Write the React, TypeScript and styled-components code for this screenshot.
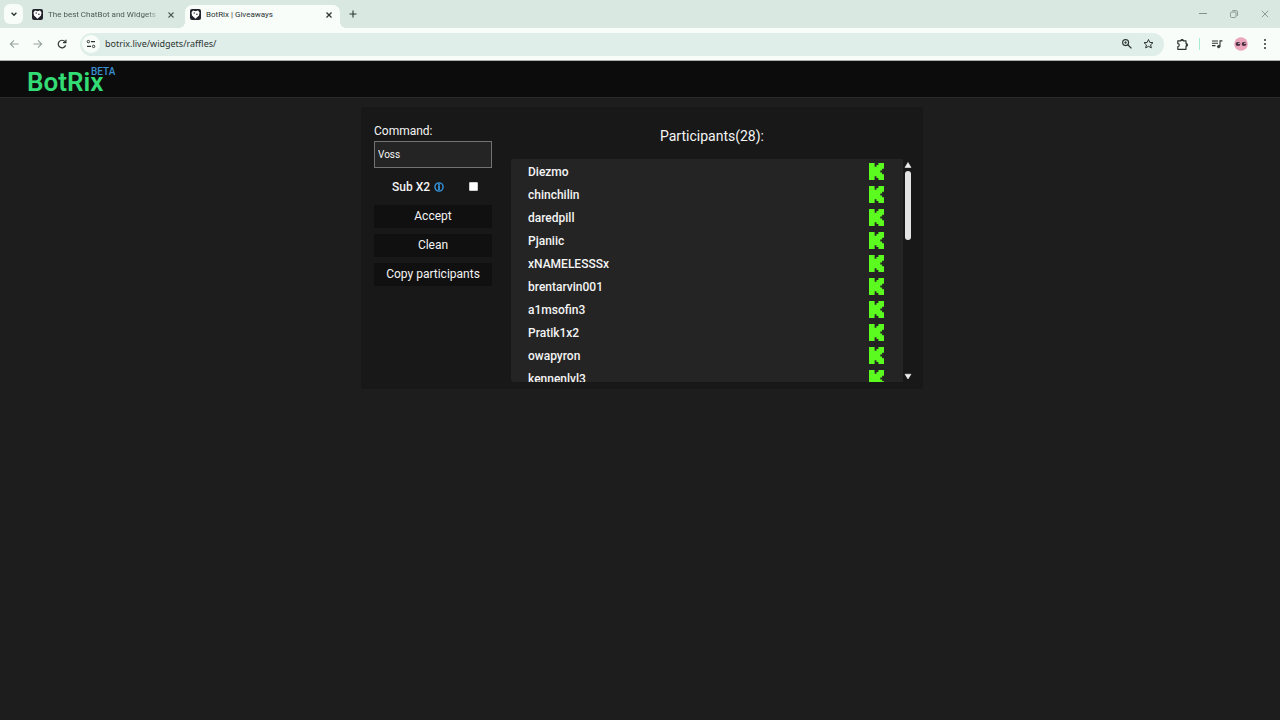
import React, { useState } from "react";
import styled, { createGlobalStyle } from "styled-components";

const GlobalStyle = createGlobalStyle`
  *, *::before, *::after { box-sizing: border-box; }
  body { margin: 0; background: #1d1d1d; color: #f4f4f4; font-family: Roboto, sans-serif; }
  button, input { font: inherit; color: inherit; }
  button { border: 0; padding: 0; background: none; cursor: pointer; }
  h1, h2, ul { margin: 0; padding: 0; font-weight: 400; }
  svg { display: block; flex: none; }
`;

const Chrome = styled.div`
  font-family: "Noto Sans", "Open Sans", sans-serif;
  color: #2c3532;
`;

const TabStrip = styled.div`
  display: flex;
  align-items: flex-end;
  height: 28px;
  padding-left: 4px;
  background: #d9e8e1;
`;

const TabSearch = styled.button`
  display: grid;
  place-items: center;
  width: 19px;
  height: 20px;
  margin-bottom: 4px;
  border-radius: 6px;
  background: #f8fdfa;
`;

const Tab = styled.div<{ $active?: boolean }>`
  position: relative;
  display: flex;
  align-items: center;
  gap: 5px;
  width: ${(p) => (p.$active ? 155 : 162)}px;
  height: 23px;
  padding: 0 ${(p) => (p.$active ? 5 : 8)}px 4px ${(p) => (p.$active ? 5 : 9)}px;
  border-radius: 7px 7px 0 0;
  background: ${(p) => (p.$active ? "#f8fdfa" : "transparent")};
  color: ${(p) => (p.$active ? "#2c3532" : "#4f5a56")};

  &::before,
  &::after {
    content: ${(p) => (p.$active ? '""' : "none")};
    position: absolute;
    bottom: 0;
    width: 6px;
    height: 6px;
  }
  &::before {
    right: 100%;
    background: radial-gradient(circle at 0 0, transparent 6px, #f8fdfa 6px);
  }
  &::after {
    left: 100%;
    background: radial-gradient(circle at 100% 0, transparent 6px, #f8fdfa 6px);
  }
`;

const TabTitle = styled.span<{ $fade?: boolean }>`
  flex: 1;
  overflow: hidden;
  font-family: Roboto, sans-serif;
  font-size: 8px;
  line-height: 12px;
  white-space: nowrap;
  ${(p) => p.$fade && "mask-image: linear-gradient(90deg, #000 88%, transparent);"}
`;

const IconButton = styled.button<{ $size?: number }>`
  display: grid;
  place-items: center;
  width: ${(p) => p.$size ?? 12}px;
  height: ${(p) => p.$size ?? 12}px;
`;

const NewTab = styled(IconButton)`
  margin: 0 0 8px 7px;
`;

const WindowControls = styled.div`
  display: flex;
  gap: 19px;
  margin: 0 9px 8px auto;
  color: #84918c;
`;

const Toolbar = styled.div`
  display: flex;
  align-items: center;
  height: 33px;
  padding: 0 8px;
  border-bottom: 1px solid #a9b0ad;
  background: #f8fdfa;
`;

const NavButtons = styled.div`
  display: flex;
  gap: 12px;
  margin-right: 12px;
`;

const AddressBar = styled.div`
  display: flex;
  flex: 1;
  align-items: center;
  height: 23px;
  padding: 0 9px 0 2px;
  border-radius: 12px;
  background: #dfeee9;
`;

const SiteInfo = styled(IconButton)`
  border-radius: 50%;
  background: #f8fdfa;
`;

const AddressInput = styled.input`
  flex: 1;
  min-width: 0;
  padding: 0 0 0 5px;
  border: 0;
  outline: 0;
  background: none;
  font-size: 9px;
  line-height: 16px;
`;

const BarIcons = styled.div`
  display: flex;
  gap: 10px;
`;

const Actions = styled.div`
  display: flex;
  align-items: center;
  gap: 10px;
  padding-left: 12px;
`;

const Divider = styled.span`
  width: 1px;
  height: 12px;
  background: #a5ecd0;
`;

const Header = styled.header`
  display: flex;
  height: 37px;
  padding: 5px 27px 0;
  border-bottom: 1px solid #2b2b2b;
  background: #0c0c0c;
`;

const Brand = styled.a`
  position: relative;
  color: #33dc74;
  font-size: 26px;
  font-weight: 600;
  line-height: 32px;
  text-decoration: none;
`;

const Beta = styled.sup`
  position: absolute;
  top: 0;
  right: -12px;
  color: #3a8fd0;
  font-size: 10px;
  font-weight: 500;
  line-height: 12px;
`;

const Main = styled.main`
  padding: 9px 8px 20px 12px;
`;

const Panel = styled.section`
  display: grid;
  grid-template-columns: 118px minmax(0, 1fr);
  gap: 19px;
  max-width: 562px;
  margin: 0 auto;
  padding: 16px 10px 7px 13px;
  border-radius: 3px;
  background: #181818;
`;

const Controls = styled.form`
  display: flex;
  flex-direction: column;
`;

const Label = styled.label`
  font-size: 12px;
  line-height: 16px;
`;

const CommandInput = styled.input`
  width: 100%;
  height: 27px;
  margin-top: 2px;
  padding: 0 3px;
  border: 1px solid #737373;
  border-radius: 0;
  outline: 0;
  background: #242424;
  font-size: 10px;
`;

const SubRow = styled.div`
  display: flex;
  align-items: center;
  gap: 4px;
  height: 37px;
  padding: 0 14px 0 18px;
  font-weight: 500;
`;

const Check = styled.input`
  appearance: none;
  width: 9px;
  height: 9px;
  margin: 0 0 0 auto;
  border: 1px solid #cfcfcf;
  border-radius: 1px;
  background: #fff;
  &:checked { background: #3a8fd0; }
`;

const ActionList = styled.div`
  display: grid;
  gap: 6px;
`;

const ActionButton = styled.button`
  height: 23px;
  background: #101010;
  font-size: 12px;
  line-height: 23px;
`;

const Participants = styled.div`
  min-width: 0;
`;

const Heading = styled.h2`
  padding: 3px 0 13px;
  font-size: 14px;
  line-height: 20px;
  text-align: center;
`;

const ListFrame = styled.div`
  display: grid;
  grid-template-columns: minmax(0, 1fr) 10px;
  height: 223px;
`;

const List = styled.ul`
  overflow: hidden;
  padding: 1px 19px 0 17px;
  border-radius: 3px 0 0 3px;
  background: #242424;
  list-style: none;
`;

const Row = styled.li`
  display: flex;
  align-items: center;
  justify-content: space-between;
  height: 23px;
  font-size: 12px;
  font-weight: 500;
`;

const Scrollbar = styled.div`
  display: flex;
  flex-direction: column;
  align-items: center;
  color: #f0f0f0;
`;

const Thumb = styled.div`
  width: 6px;
  height: 69px;
  margin-bottom: auto;
  border-radius: 3px;
  background: #e4e4e4;
`;

type StrokeProps = { d: string; size?: number; width?: number; color?: string };

const Stroke = ({ d, size = 12, width = 1.1, color = "currentColor" }: StrokeProps) => (
  <svg width={size} height={size} viewBox="0 0 12 12" fill="none" stroke={color} strokeWidth={width}>
    <path d={d} />
  </svg>
);

const Favicon = () => (
  <svg width="11" height="11" viewBox="0 0 11 11">
    <rect width="11" height="11" rx="2" fill="#23232c" />
    <path d="M3 1.5 5.5 2.2 8 1.5 9.5 3.6 9 6.5 5.5 9.8 2 6.5 1.5 3.6Z" fill="#fff" />
    <circle cx="4.2" cy="4" r=".7" fill="#23232c" />
    <circle cx="6.9" cy="5.2" r=".7" fill="#23232c" />
  </svg>
);

const KickLogo = () => (
  <svg width="15" height="17" viewBox="0 0 8 9" preserveAspectRatio="none" fill="#5cfb20" role="img" aria-label="Kick">
    <path d="M0 0H3V2H4V1H5V0H8V3H7V4H6V5H7V6H8V9H5V8H4V7H3V9H0Z" />
  </svg>
);

const InfoIcon = () => (
  <svg width="10" height="10" viewBox="0 0 10 10" fill="none" stroke="#3594dc">
    <circle cx="5" cy="5" r="4.1" strokeWidth="1.4" />
    <path d="M5 1.6v1.6M5 3.6v4.6" strokeWidth="1.8" />
  </svg>
);

const SiteInfoIcon = () => (
  <svg width="10" height="10" viewBox="0 0 10 10" fill="none" stroke="currentColor">
    <circle cx="2.4" cy="2.6" r="1.2" />
    <path d="M5 2.6h4M1 7.4h4" strokeWidth="1.1" />
    <circle cx="7.6" cy="7.4" r="1.2" />
  </svg>
);

const ZoomIcon = () => (
  <svg width="12" height="12" viewBox="0 0 12 12" fill="none" stroke="currentColor">
    <circle cx="4.6" cy="4.6" r="3" strokeWidth="1.1" />
    <path d="m6.8 6.8 3.6 3.6" strokeWidth="1.3" />
    <path d="M4.6 3.2v2.8M3.2 4.6h2.8" strokeWidth=".8" />
  </svg>
);

const PuzzleIcon = () => (
  <svg width="13" height="13" viewBox="0 0 13 13" fill="none" stroke="currentColor" strokeWidth="1.2" strokeLinejoin="round">
    <path d="M1.8 2.8H4.9A1.2 1.2 0 0 1 7.3 2.8H10V5.6A1.3 1.3 0 0 1 10 8.2V11.3H1.8V8.6A1.4 1.4 0 0 0 1.8 5.6Z" />
    <path d="M5 2.5A1.1 1.1 0 0 1 7.2 2.5ZM10.4 5.8A1.1 1.1 0 0 1 10.4 8Z" fill="currentColor" strokeWidth=".8" />
  </svg>
);

const MediaIcon = () => (
  <svg width="12" height="12" viewBox="0 0 12 12" fill="none" stroke="currentColor" strokeWidth="1.1">
    <path d="M1 3h6M1 5.3h6M1 7.6h3.5M9 8.6V2.9h2.4" />
    <circle cx="7.7" cy="8.6" r="1.3" fill="currentColor" strokeWidth=".6" />
  </svg>
);

const Avatar = () => (
  <svg width="14" height="14" viewBox="0 0 14 14">
    <circle cx="7" cy="7" r="6.8" fill="#eaa6bd" />
    <ellipse cx="4" cy="7" rx="2.4" ry="1.9" fill="#4c2e40" />
    <ellipse cx="10" cy="7" rx="2.4" ry="1.9" fill="#4c2e40" />
    <path d="M4.2 6.5h1.5M10.2 6.5h1.5" stroke="#f3dbe5" strokeWidth=".9" />
  </svg>
);

const MenuDots = () => (
  <svg width="12" height="12" viewBox="0 0 12 12" fill="currentColor">
    <circle cx="6" cy="2" r="1" />
    <circle cx="6" cy="6" r="1" />
    <circle cx="6" cy="10" r="1" />
  </svg>
);

const RestoreIcon = () => (
  <svg width="12" height="12" viewBox="0 0 12 12" fill="none" stroke="currentColor" strokeWidth=".9">
    <rect x="2.5" y="4" width="5.5" height="5.5" rx="1.2" />
    <path d="M4.3 2.6H8A1.5 1.5 0 0 1 9.5 4.1V7.8" />
  </svg>
);

const CLOSE = "m3.5 3.5 5 5m0-5-5 5";

const participants = [
  "Diezmo",
  "chinchilin",
  "daredpill",
  "Pjaniic",
  "xNAMELESSSx",
  "brentarvin001",
  "a1msofin3",
  "Pratik1x2",
  "owapyron",
  "kennenlvl3",
];

export default function App() {
  const [command, setCommand] = useState("Voss");
  const [address, setAddress] = useState("botrix.live/widgets/raffles/");

  return (
    <>
      <GlobalStyle />
      <Chrome>
        <TabStrip>
          <TabSearch aria-label="Search tabs">
            <Stroke d="m3.6 4.8 2.4 2.4 2.4-2.4" width={1.4} />
          </TabSearch>
          <Tab>
            <Favicon />
            <TabTitle $fade>The best ChatBot and Widgets</TabTitle>
            <IconButton aria-label="Close tab"><Stroke d={CLOSE} /></IconButton>
          </Tab>
          <Tab $active>
            <Favicon />
            <TabTitle>BotRix | Giveaways</TabTitle>
            <IconButton aria-label="Close tab"><Stroke d={CLOSE} width={1.3} /></IconButton>
          </Tab>
          <NewTab aria-label="New tab"><Stroke d="M6 2.5v7M2.5 6h7" /></NewTab>
          <WindowControls>
            <IconButton aria-label="Minimize"><Stroke d="M2 5.5h8" width={1} /></IconButton>
            <IconButton aria-label="Restore"><RestoreIcon /></IconButton>
            <IconButton aria-label="Close window"><Stroke d="m2.8 2.8 6.4 6.4m0-6.4L2.8 9.2" width={0.9} /></IconButton>
          </WindowControls>
        </TabStrip>
        <Toolbar>
          <NavButtons>
            <IconButton aria-label="Back"><Stroke color="#98a39f" d="M10.5 6H2.5M6 2.3 2.3 6 6 9.7" /></IconButton>
            <IconButton aria-label="Forward"><Stroke color="#98a39f" d="M1.5 6h8M6 2.3 9.7 6 6 9.7" /></IconButton>
            <IconButton aria-label="Reload"><Stroke d="M9.6 7.3A3.8 3.8 0 1 1 9 3.7M9.9 1.8V4.7H7" width={1.2} /></IconButton>
          </NavButtons>
          <AddressBar>
            <SiteInfo $size={18} aria-label="Site information"><SiteInfoIcon /></SiteInfo>
            <AddressInput aria-label="Address" value={address} onChange={(e) => setAddress(e.target.value)} />
            <BarIcons>
              <IconButton aria-label="Zoom"><ZoomIcon /></IconButton>
              <IconButton aria-label="Bookmark">
                <Stroke d="m5.5 1.5 1.3 2.9 3.2.3-2.4 2.1.7 3.1L5.5 8.3 2.7 9.9l.7-3.1L1 4.7l3.2-.3Z" width={1} />
              </IconButton>
            </BarIcons>
          </AddressBar>
          <Actions>
            <IconButton $size={13} aria-label="Extensions"><PuzzleIcon /></IconButton>
            <Divider />
            <IconButton $size={14} aria-label="Media"><MediaIcon /></IconButton>
            <IconButton $size={14} aria-label="Profile"><Avatar /></IconButton>
            <IconButton $size={14} aria-label="Menu"><MenuDots /></IconButton>
          </Actions>
        </Toolbar>
      </Chrome>

      <Header>
        <Brand href="#">BotRix<Beta>BETA</Beta></Brand>
      </Header>

      <Main>
        <Panel>
          <Controls onSubmit={(e) => e.preventDefault()}>
            <Label htmlFor="command">Command:</Label>
            <CommandInput id="command" value={command} onChange={(e) => setCommand(e.target.value)} />
            <SubRow>
              <Label htmlFor="sub">Sub X2</Label>
              <InfoIcon />
              <Check id="sub" type="checkbox" />
            </SubRow>
            <ActionList>
              <ActionButton type="button">Accept</ActionButton>
              <ActionButton type="button">Clean</ActionButton>
              <ActionButton type="button">Copy participants</ActionButton>
            </ActionList>
          </Controls>
          <Participants>
            <Heading>Participants(28):</Heading>
            <ListFrame>
              <List>
                {participants.map((name) => (
                  <Row key={name}>
                    {name}
                    <KickLogo />
                  </Row>
                ))}
              </List>
              <Scrollbar>
                <IconButton aria-label="Scroll up">
                  <svg width="12" height="12" viewBox="0 0 12 12" fill="currentColor">
                    <path d="M6 3.5 9 8.5H3Z" stroke="currentColor" strokeLinejoin="round" strokeWidth=".6" />
                  </svg>
                </IconButton>
                <Thumb />
                <IconButton aria-label="Scroll down">
                  <svg width="12" height="12" viewBox="0 0 12 12" fill="currentColor">
                    <path d="M6 9 9 4.2H3Z" stroke="currentColor" strokeLinejoin="round" strokeWidth=".6" />
                  </svg>
                </IconButton>
              </Scrollbar>
            </ListFrame>
          </Participants>
        </Panel>
      </Main>
    </>
  );
}
